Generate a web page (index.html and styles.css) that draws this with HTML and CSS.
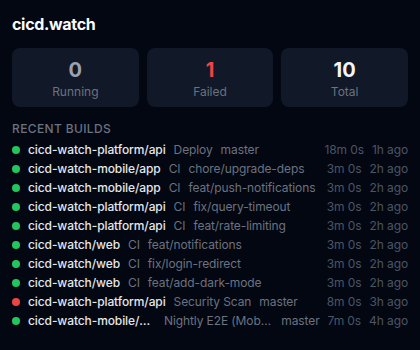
FILE: index.html
```html
<!DOCTYPE html>
<html>
<head>
<meta charset="utf-8">
<link rel="stylesheet" href="styles.css">
</head>
<body>
<div class="app">
  <h1 class="title">cicd.watch</h1>
  <div class="stats">
    <div class="stat"><div class="num num-running">0</div><div class="label">Running</div></div>
    <div class="stat"><div class="num num-failed">1</div><div class="label">Failed</div></div>
    <div class="stat"><div class="num num-total">10</div><div class="label">Total</div></div>
  </div>
  <div class="section-title">Recent Builds</div>
  <ul class="builds">
    <li class="build"><span class="dot ok"></span><span class="info"><span class="repo">cicd-watch-platform/api</span><span class="wf">Deploy</span><span class="branch">master</span></span><span class="dur">18m 0s</span><span class="ago">1h ago</span></li>
    <li class="build"><span class="dot ok"></span><span class="info"><span class="repo">cicd-watch-mobile/app</span><span class="wf">CI</span><span class="branch">chore/upgrade-deps</span></span><span class="dur">3m 0s</span><span class="ago">2h ago</span></li>
    <li class="build"><span class="dot ok"></span><span class="info"><span class="repo">cicd-watch-mobile/app</span><span class="wf">CI</span><span class="branch">feat/push-notifications</span></span><span class="dur">3m 0s</span><span class="ago">2h ago</span></li>
    <li class="build"><span class="dot ok"></span><span class="info"><span class="repo">cicd-watch-platform/api</span><span class="wf">CI</span><span class="branch">fix/query-timeout</span></span><span class="dur">3m 0s</span><span class="ago">2h ago</span></li>
    <li class="build"><span class="dot ok"></span><span class="info"><span class="repo">cicd-watch-platform/api</span><span class="wf">CI</span><span class="branch">feat/rate-limiting</span></span><span class="dur">3m 0s</span><span class="ago">2h ago</span></li>
    <li class="build"><span class="dot ok"></span><span class="info"><span class="repo">cicd-watch/web</span><span class="wf">CI</span><span class="branch">feat/notifications</span></span><span class="dur">3m 0s</span><span class="ago">2h ago</span></li>
    <li class="build"><span class="dot ok"></span><span class="info"><span class="repo">cicd-watch/web</span><span class="wf">CI</span><span class="branch">fix/login-redirect</span></span><span class="dur">3m 0s</span><span class="ago">2h ago</span></li>
    <li class="build"><span class="dot ok"></span><span class="info"><span class="repo">cicd-watch/web</span><span class="wf">CI</span><span class="branch">feat/add-dark-mode</span></span><span class="dur">3m 0s</span><span class="ago">2h ago</span></li>
    <li class="build"><span class="dot fail"></span><span class="info"><span class="repo">cicd-watch-platform/api</span><span class="wf">Security Scan</span><span class="branch">master</span></span><span class="dur">8m 0s</span><span class="ago">3h ago</span></li>
    <li class="build"><span class="dot ok"></span><span class="info"><span class="repo">cicd-watch-mobile/app</span><span class="wf">Nightly E2E (Mobile)</span><span class="branch">master</span></span><span class="dur">7m 0s</span><span class="ago">4h ago</span></li>
  </ul>
</div>
</body>
</html>
```

FILE: styles.css
```css
* { box-sizing: border-box; }
html, body {
  margin: 0;
  padding: 0;
  background: #030712;
  height: 100%;
}
body {
  font-family: Inter, "Liberation Sans", sans-serif;
  color: #e5e7eb;
  -webkit-font-smoothing: antialiased;
}
.app {
  padding: 12px;
  display: flex;
  flex-direction: column;
}
.title {
  margin: 0;
  font-size: 16px;
  line-height: 24px;
  font-weight: 700;
  letter-spacing: -0.3px;
  color: #f9fafb;
}
.stats {
  margin-top: 12px;
  display: grid;
  grid-template-columns: repeat(3, 1fr);
  gap: 8px;
}
.stat {
  background: #111827;
  border-radius: 8px;
  padding: 8px 0 7px;
  text-align: center;
}
.num {
  font-size: 20px;
  line-height: 28px;
  font-weight: 700;
}
.num-running { color: #9ca3af; }
.num-failed { color: #ef4444; }
.num-total { color: #f3f4f6; }
.label {
  font-size: 12px;
  line-height: 16px;
  color: #6b7280;
}
.section-title {
  margin-top: 14px;
  font-size: 12px;
  line-height: 16px;
  font-weight: 500;
  letter-spacing: 0.03em;
  text-transform: uppercase;
  color: #6b7280;
}
.builds {
  list-style: none;
  margin: 3px 0 0;
  padding: 0;
}
.build {
  display: flex;
  align-items: center;
  gap: 8px;
  height: 19px;
  font-size: 12px;
  letter-spacing: -0.1px;
  white-space: nowrap;
}
.dot {
  flex: none;
  width: 8px;
  height: 8px;
  border-radius: 50%;
}
.dot.ok { background: #22c55e; }
.dot.fail { background: #ef4444; }
.info {
  flex: 1;
  min-width: 0;
  display: flex;
  gap: 8px;
  overflow: hidden;
}
.repo {
  min-width: 0;
  overflow: hidden;
  text-overflow: ellipsis;
  font-weight: 500;
  color: #e5e7eb;
}
.wf {
  min-width: 0;
  overflow: hidden;
  text-overflow: ellipsis;
  color: #6b7280;
}
.branch {
  flex: 0 0 auto;
  color: #6b7280;
}
.dur, .ago {
  flex: none;
  color: #4b5563;
}
```
